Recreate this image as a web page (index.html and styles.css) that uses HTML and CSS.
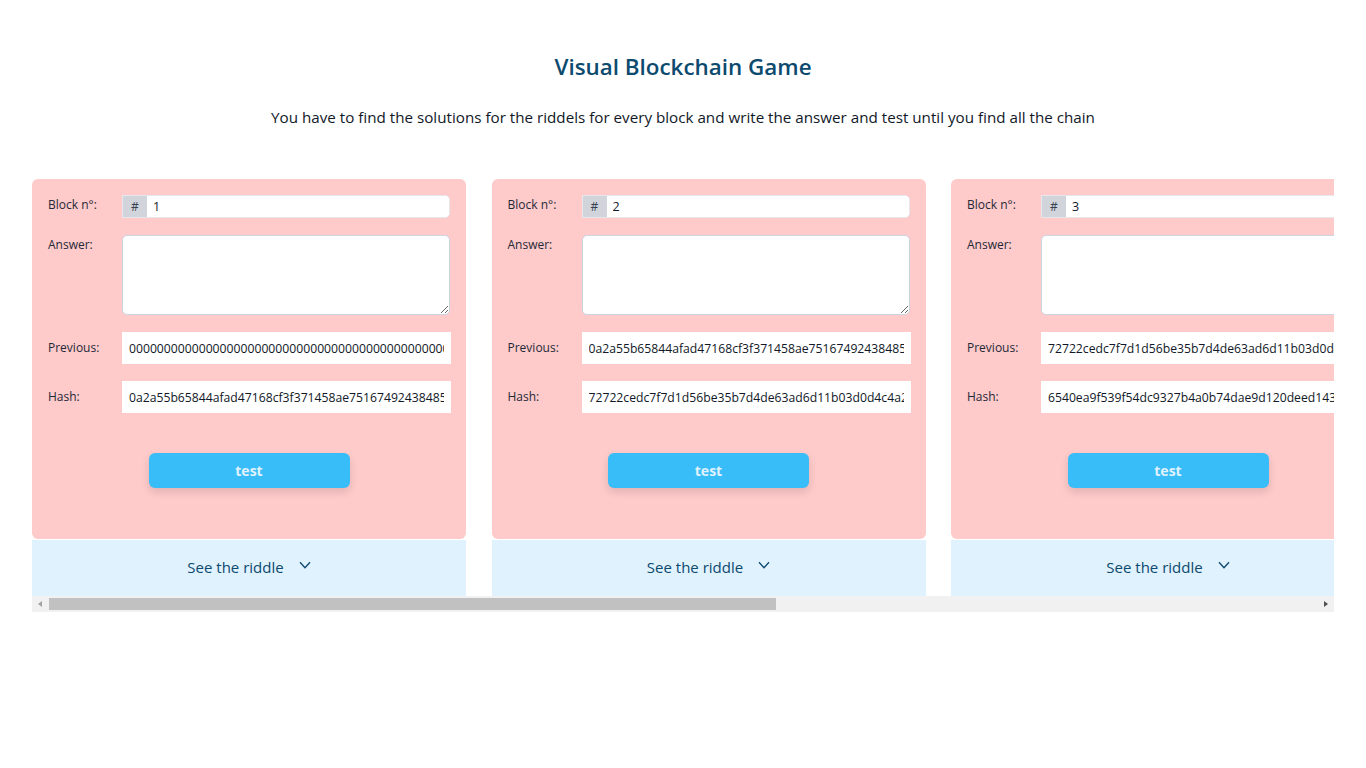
FILE: index.html
```html
<!DOCTYPE html>
<html lang="en">
<head>
<meta charset="utf-8">
<title>Visual Blockchain Game</title>
<link rel="stylesheet" href="styles.css">
</head>
<body>
<header class="header">
  <h1 class="title">Visual Blockchain Game</h1>
  <p class="subtitle">You have to find the solutions for the riddels for every block and write the answer and test until you find all the chain</p>
</header>
<div class="scroller">
<main class="chain">
  <section class="block">
    <div class="block-body">
      <div class="row row-top">
        <label class="label">Block n°:</label>
        <div class="group"><span class="addon">#</span><input class="num" value="1"></div>
      </div>
      <div class="row row-top">
        <label class="label">Answer:</label>
        <textarea class="answer"></textarea>
      </div>
      <div class="row row-mid">
        <label class="label">Previous:</label>
        <input class="hash" value="0000000000000000000000000000000000000000000000000000000000000000">
      </div>
      <div class="row row-mid">
        <label class="label">Hash:</label>
        <input class="hash" value="0a2a55b65844afad47168cf3f371458ae75167492438485a0000000000000000">
      </div>
      <div class="actions"><button class="test">test</button></div>
    </div>
    <div class="riddle"><span>See the riddle</span><svg class="chev" width="12" height="8" viewBox="0 0 12 8"><path d="M1 1.2 L6 6.8 L11 1.2" fill="none" stroke="#0c4a6e" stroke-width="1.3"/></svg></div>
  </section>
  <section class="block">
    <div class="block-body">
      <div class="row row-top">
        <label class="label">Block n°:</label>
        <div class="group"><span class="addon">#</span><input class="num" value="2"></div>
      </div>
      <div class="row row-top">
        <label class="label">Answer:</label>
        <textarea class="answer"></textarea>
      </div>
      <div class="row row-mid">
        <label class="label">Previous:</label>
        <input class="hash" value="0a2a55b65844afad47168cf3f371458ae75167492438485a0000000000000000">
      </div>
      <div class="row row-mid">
        <label class="label">Hash:</label>
        <input class="hash" value="72722cedc7f7d1d56be35b7d4de63ad6d11b03d0d4c4a2e000000000000000">
      </div>
      <div class="actions"><button class="test">test</button></div>
    </div>
    <div class="riddle"><span>See the riddle</span><svg class="chev" width="12" height="8" viewBox="0 0 12 8"><path d="M1 1.2 L6 6.8 L11 1.2" fill="none" stroke="#0c4a6e" stroke-width="1.3"/></svg></div>
  </section>
  <section class="block">
    <div class="block-body">
      <div class="row row-top">
        <label class="label">Block n°:</label>
        <div class="group"><span class="addon">#</span><input class="num" value="3"></div>
      </div>
      <div class="row row-top">
        <label class="label">Answer:</label>
        <textarea class="answer"></textarea>
      </div>
      <div class="row row-mid">
        <label class="label">Previous:</label>
        <input class="hash" value="72722cedc7f7d1d56be35b7d4de63ad6d11b03d0d4c4a2e000000000000000">
      </div>
      <div class="row row-mid">
        <label class="label">Hash:</label>
        <input class="hash" value="6540ea9f539f54dc9327b4a0b74dae9d120deed1430000000000000000000000">
      </div>
      <div class="actions"><button class="test">test</button></div>
    </div>
    <div class="riddle"><span>See the riddle</span><svg class="chev" width="12" height="8" viewBox="0 0 12 8"><path d="M1 1.2 L6 6.8 L11 1.2" fill="none" stroke="#0c4a6e" stroke-width="1.3"/></svg></div>
  </section>
  <section class="block">
    <div class="block-body">
      <div class="row row-top">
        <label class="label">Block n°:</label>
        <div class="group"><span class="addon">#</span><input class="num" value="4"></div>
      </div>
      <div class="row row-top">
        <label class="label">Answer:</label>
        <textarea class="answer"></textarea>
      </div>
      <div class="row row-mid">
        <label class="label">Previous:</label>
        <input class="hash" value="6540ea9f539f54dc9327b4a0b74dae9d120deed1430000000000000000000000">
      </div>
      <div class="row row-mid">
        <label class="label">Hash:</label>
        <input class="hash" value="3f1c0d8e2b7a9c4e5d6f708192a3b4c5d6e7f8091a2b3c4d5e6f708192a3b4c5">
      </div>
      <div class="actions"><button class="test">test</button></div>
    </div>
    <div class="riddle"><span>See the riddle</span><svg class="chev" width="12" height="8" viewBox="0 0 12 8"><path d="M1 1.2 L6 6.8 L11 1.2" fill="none" stroke="#0c4a6e" stroke-width="1.3"/></svg></div>
  </section>
  <section class="block">
    <div class="block-body">
      <div class="row row-top">
        <label class="label">Block n°:</label>
        <div class="group"><span class="addon">#</span><input class="num" value="5"></div>
      </div>
      <div class="row row-top">
        <label class="label">Answer:</label>
        <textarea class="answer"></textarea>
      </div>
      <div class="row row-mid">
        <label class="label">Previous:</label>
        <input class="hash" value="3f1c0d8e2b7a9c4e5d6f708192a3b4c5d6e7f8091a2b3c4d5e6f708192a3b4c5">
      </div>
      <div class="row row-mid">
        <label class="label">Hash:</label>
        <input class="hash" value="9b8a7c6d5e4f30211203f4e5d6c7b8a99a8b7c6d5e4f30211203f4e5d6c7b8a9">
      </div>
      <div class="actions"><button class="test">test</button></div>
    </div>
    <div class="riddle"><span>See the riddle</span><svg class="chev" width="12" height="8" viewBox="0 0 12 8"><path d="M1 1.2 L6 6.8 L11 1.2" fill="none" stroke="#0c4a6e" stroke-width="1.3"/></svg></div>
  </section>
</main>
<div class="scrollbar" aria-hidden="true">
  <span class="sb-arrow sb-left"></span>
  <div class="sb-track"><div class="sb-thumb"></div></div>
  <span class="sb-arrow sb-right"></span>
</div>
</div>
</body>
</html>
```

FILE: styles.css
```css
* { box-sizing: border-box; }

body {
  margin: 0;
  background: #ffffff;
  font-family: "Open Sans", "Noto Sans", sans-serif;
  color: #111827;
}

.header {
  padding-top: 51px;
  text-align: center;
}

.title {
  margin: 0;
  font-size: 22.4px;
  line-height: 32px;
  font-weight: 600;
  color: #0c4a6e;
}

.subtitle {
  margin: 22px 0 0;
  font-size: 15.2px;
  line-height: 24px;
  color: #111827;
}

.scroller {
  margin: 50px 32px 0;
}

.chain {
  display: flex;
  gap: 25.5px;
  overflow: hidden;
}

.block {
  flex: 0 0 434px;
  display: flex;
  flex-direction: column;
}

.block-body {
  background: #fecaca;
  border-radius: 6px;
  padding: 16px 16px 51px;
  display: flex;
  flex-direction: column;
  gap: 17px;
}

.row {
  display: flex;
}

.row-top { align-items: flex-start; }
.row-mid { align-items: center; }

.label {
  flex: 0 0 74px;
  font-size: 12px;
  line-height: 20px;
  color: #1f2937;
}

.row-mid .label { line-height: 32px; }

.group {
  flex: 1;
  display: flex;
  height: 23px;
  border: 1px solid #e5e7eb;
  border-radius: 0 5px 5px 0;
  background: #fff;
  overflow: hidden;
}

.addon {
  width: 24px;
  background: #d1d5db;
  color: #374151;
  font-size: 12px;
  line-height: 21px;
  text-align: center;
}

.num {
  flex: 1;
  min-width: 0;
  border: 0;
  padding: 2px 6px;
  font-family: inherit;
  font-size: 12.5px;
  color: #111827;
  background: #fff;
  outline: none;
}

.answer {
  flex: 1;
  height: 80px;
  border: 1px solid #cbd5e1;
  border-radius: 5px;
  background: #fff;
  resize: vertical;
  font-family: inherit;
}

.hash {
  flex: 1;
  min-width: 0;
  height: 32px;
  border: 0;
  border-radius: 0;
  padding: 0 7px;
  margin-right: -1px;
  font-family: inherit;
  font-size: 12.2px;
  color: #111827;
  background: #fff;
  outline: none;
}

.actions {
  display: flex;
  justify-content: center;
  padding-top: 23px;
}

.test {
  width: 201px;
  height: 35px;
  border: 0;
  border-radius: 6px;
  background: #38bdf8;
  color: #e0f2fe;
  font-family: inherit;
  font-size: 14px;
  font-weight: 700;
  box-shadow: 0 4px 8px rgba(0,0,0,0.12);
}

.riddle {
  margin-top: 1px;
  height: 56px;
  padding-bottom: 2px;
  background: #e0f2fe;
  display: flex;
  align-items: center;
  justify-content: center;
  gap: 15px;
  color: #0c4a6e;
  font-size: 15px;
}

.chev { margin-top: -4px; }

.scrollbar {
  display: flex;
  align-items: center;
  height: 16px;
  background: #f1f1f1;
}

.sb-arrow {
  flex: 0 0 17px;
  height: 16px;
  position: relative;
}

.sb-left::after,
.sb-right::after {
  content: "";
  position: absolute;
  top: 5px;
  width: 0;
  height: 0;
  border-top: 3px solid transparent;
  border-bottom: 3px solid transparent;
}

.sb-left::after { left: 6px; border-right: 4px solid #a3a3a3; }
.sb-right::after { right: 6px; border-left: 4px solid #505050; }

.sb-track {
  flex: 1;
  height: 16px;
  display: flex;
  align-items: center;
}

.sb-thumb {
  width: 727px;
  height: 12px;
  background: #c1c1c1;
}
```
